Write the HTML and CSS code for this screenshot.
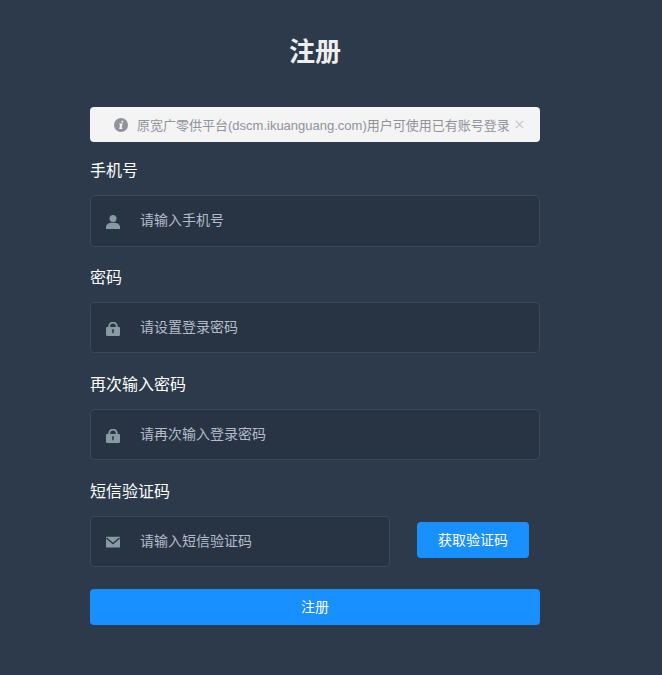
FILE: index.html
```html
<!DOCTYPE html>
<html lang="zh-CN">
<head>
<meta charset="utf-8">
<title>注册</title>
<link rel="stylesheet" href="styles.css">
</head>
<body>
<form class="form">
  <h1 class="title">注册</h1>
  <div class="alert">
    <svg class="alert-icon" viewBox="0 0 14 14"><circle cx="7" cy="7" r="7" fill="#909399"/><path d="M7.700 2.700h1.800l-.4 1.700H7.300zM6.900 5.500h1.700l-1 4.200h1l-.3 1.400H5.800c-.5 0-.7-.3-.6-.7l.9-3.600h-.9l.2-1.300z" fill="#f4f4f5"/></svg>
    <span class="alert-text">原宽广零供平台(dscm.ikuanguang.com)用户可使用已有账号登录</span>
    <svg class="alert-close" viewBox="0 0 10 10"><path d="M1 1l8 8M9 1l-8 8" stroke="#c0c4cc" stroke-width="1.300" fill="none"/></svg>
  </div>

  <label class="label">手机号</label>
  <div class="field field-first">
    <svg class="field-icon icon-user" viewBox="0 0 14 14"><circle cx="7" cy="3.500" r="3.500"/><path d="M0 14v-2C0 9.300 2.800 7.800 7 7.800s7 1.500 7 4.200v2z"/></svg>
    <input class="input" type="text" placeholder="请输入手机号">
  </div>

  <label class="label">密码</label>
  <div class="field">
    <svg class="field-icon icon-lock" viewBox="0 0 14 14"><path fill-rule="evenodd" d="M2.300 5V4.300a4.700 4.700 0 0 1 9.400 0V5h1.100c.7 0 1.200.5 1.200 1.200v6.600c0 .7-.5 1.200-1.200 1.200H1.200C.5 14 0 13.500 0 12.800V6.200C0 5.500.5 5 1.200 5zm1.900 0h5.600v-.7a2.800 2.800 0 0 0-5.600 0zM6.300 9v2.200h1.400V9a1 1 0 1 0-1.400 0z"/></svg>
    <input class="input" type="password" placeholder="请设置登录密码">
  </div>

  <label class="label">再次输入密码</label>
  <div class="field">
    <svg class="field-icon icon-lock" viewBox="0 0 14 14"><path fill-rule="evenodd" d="M2.300 5V4.300a4.700 4.700 0 0 1 9.400 0V5h1.100c.7 0 1.200.5 1.200 1.200v6.600c0 .7-.5 1.200-1.200 1.200H1.200C.5 14 0 13.500 0 12.800V6.200C0 5.500.5 5 1.200 5zm1.900 0h5.600v-.7a2.800 2.800 0 0 0-5.600 0zM6.300 9v2.200h1.400V9a1 1 0 1 0-1.400 0z"/></svg>
    <input class="input" type="password" placeholder="请再次输入登录密码">
  </div>

  <label class="label">短信验证码</label>
  <div class="code-row">
    <div class="field field-code">
      <svg class="field-icon" viewBox="0 0 14 14"><path fill-rule="evenodd" d="M0 1.800h14v10.800H0zM.9 2.400l6.100 5.300 6.100-5.300.9 1.200L7 9.500 0 3.600z"/></svg>
      <input class="input" type="text" placeholder="请输入短信验证码">
    </div>
    <button class="btn btn-code" type="button">获取验证码</button>
  </div>

  <button class="btn btn-submit" type="button">注册</button>
</form>
</body>
</html>
```
FILE: styles.css
```css
* { box-sizing: border-box; }
html, body { height: 100%; }
body {
  margin: 0;
  background: #2d3a4b;
  font-family: "Liberation Sans", "Noto Sans CJK SC", sans-serif;
  overflow: hidden;
}
.form {
  width: 450px;
  margin-left: 90px;
  padding-top: 35px;
  display: flex;
  flex-direction: column;
}
.title {
  margin: 0 0 38px;
  height: 34px;
  line-height: 34px;
  text-align: center;
  font-size: 26px;
  font-weight: 700;
  color: #eee;
}
.alert {
  height: 35px;
  background: #f4f4f5;
  border-radius: 4px;
  color: #909399;
  display: flex;
  align-items: center;
  padding-left: 24px;
}
.alert-icon { width: 14px; height: 14px; flex: none; margin-right: 9px; }
.alert-text { font-size: 13px; white-space: nowrap; }
.alert-close { width: 9px; height: 9px; flex: none; margin-left: 5px; }
.label {
  display: block;
  margin-top: 17px;
  height: 24px;
  line-height: 24px;
  font-size: 16px;
  color: #fff;
}
.field {
  margin-top: 12px;
  margin-bottom: 3px;
  height: 51px;
  background: #283443;
  border: 1px solid rgba(255, 255, 255, .1);
  border-radius: 5px;
  display: flex;
  align-items: center;
  padding-left: 15px;
}
.field-first { height: 52px; margin-bottom: 2px; }
.field-icon { width: 14px; height: 14px; flex: none; fill: #889aa4; margin-right: 20px; }
.icon-user { margin-top: 2px; }
.icon-lock { margin-top: 3px; }
.input {
  flex: 1;
  min-width: 0;
  height: 47px;
  border: 0;
  padding: 0 0 2px;
  background: transparent;
  color: #fff;
  font: 14px "Liberation Sans", "Noto Sans CJK SC", sans-serif;
  outline: none;
}
.input::placeholder { color: #b4bccc; opacity: 1; }
.code-row {
  display: flex;
  align-items: flex-start;
  margin-top: 12px;
  margin-bottom: 22px;
}
.field-code { width: 300px; flex: none; margin: 0; }
.btn {
  border: 0;
  border-radius: 4px;
  background: #1890ff;
  color: #fff;
  font: 14px "Liberation Sans", "Noto Sans CJK SC", sans-serif;
  height: 36px;
  padding: 0 0 2px;
}
.btn-code { width: 112px; margin: 6px 0 0 27px; }
.btn-submit { width: 100%; }
```
